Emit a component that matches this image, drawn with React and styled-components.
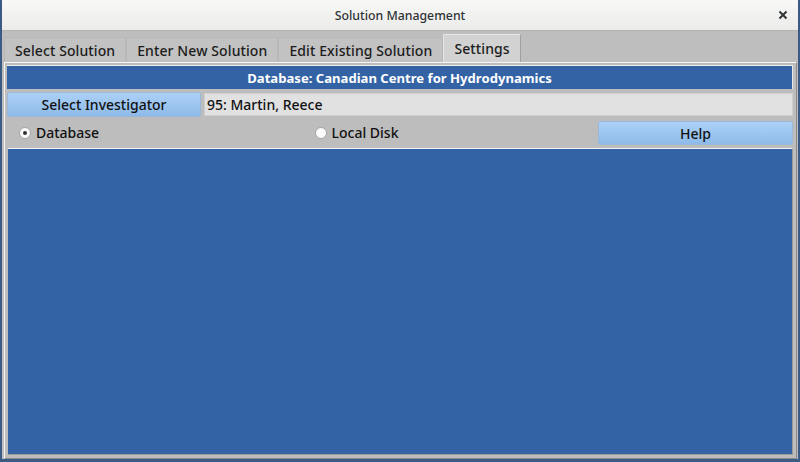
import React from "react";
import styled, { createGlobalStyle } from "styled-components";

const GlobalStyle = createGlobalStyle`
	html, body {
		margin: 0;
		padding: 0;
		background: #3b5b84;
		font-family: "Noto Sans", "Open Sans", sans-serif;
	}
`;

const Window = styled.div`
	display: flex;
	flex-direction: column;
	width: 796px;
	height: 459px;
	margin-left: 2px;
	background: #bebebe;
`;

const TitleBar = styled.div`
	position: relative;
	display: flex;
	align-items: center;
	justify-content: center;
	height: 31px;
	background: linear-gradient(#f8f8f7, #ebebea);
	border-bottom: 1px solid #b3b3b3;
	box-sizing: border-box;
`;

const Title = styled.span`
	font-size: 12.3px;
	font-weight: 500;
	color: #2e3436;
`;

const CloseButton = styled.button`
	position: absolute;
	right: 8px;
	top: 8px;
	width: 14px;
	height: 14px;
	padding: 0;
	border: none;
	background: none;
	display: flex;
	align-items: center;
	justify-content: center;
`;

const Body = styled.div`
	flex: 1;
	display: flex;
	flex-direction: column;
	padding: 0 1px 0 2px;
	min-height: 0;
`;

const TabBar = styled.div`
	display: flex;
	align-items: flex-end;
	height: 31px;
`;

const Tab = styled.div`
	display: flex;
	align-items: center;
	justify-content: center;
	box-sizing: border-box;
	height: ${p => (p.active ? "28px" : "25px")};
	padding: 0 10px;
	font-size: 14px;
	font-weight: 500;
	letter-spacing: 0.1px;
	color: #1c1c1c;
	background: ${p => (p.active ? "#d2d2d2" : "#c2c2c2")};
	border: 1px solid ${p => (p.active ? "#a8a8a8" : "#b0b0b0")};
	border-bottom: none;
	border-right-color: ${p => (p.active ? "#a0a0a0" : "#b8b8b8")};
	border-top-color: ${p => (p.active ? "#e6e6e6" : "#b8b8b8")};
	border-left-color: ${p => (p.active ? "#e6e6e6" : "#b8b8b8")};
	border-radius: 2px 2px 0 0;
`;

const Panel = styled.div`
	flex: 1;
	display: flex;
	flex-direction: column;
	gap: 3px;
	padding: 2px 3px 3px 2px;
	border: 1px solid;
	border-color: #f4f4f4 #8a8a8a #8a8a8a #f4f4f4;
	background: #bdbdbd;
	min-height: 0;
`;

const Banner = styled.div`
	display: flex;
	align-items: center;
	justify-content: center;
	height: 23px;
	background: #3363a5;
	color: #ffffff;
	font-size: 13.1px;
	font-weight: 700;
	border-top: 1px solid #f0f0f0;
	border-right: 1px solid #e8e8e8;
`;

const Row = styled.div`
	display: grid;
	grid-template-columns: ${p => p.columns};
	gap: 3px;
	height: ${p => p.height || "25px"};
	align-items: stretch;
`;

const BlueButton = styled.button`
	font-family: inherit;
	font-size: 14px;
	font-weight: 500;
	color: #111;
	border: 1px solid #9bb8d8;
	border-radius: 2px;
	background: linear-gradient(#acd1f7, #8fbae8);
	padding: 0;
	margin: ${p => p.margin || "0"};
`;

const Field = styled.div`
	display: flex;
	align-items: center;
	padding-left: 2px;
	margin: 1px 0;
	font-size: 14px;
	font-weight: 500;
	color: #111;
	background: #e1e1e1;
	border: 1px solid #cfcfcf;
`;

const RadioLabel = styled.label`
	display: flex;
	align-items: center;
	gap: 5px;
	padding-left: 12px;
	font-size: 14px;
	font-weight: 500;
	color: #111;
`;

const RadioDot = styled.span`
	width: 10px;
	height: 10px;
	border-radius: 50%;
	background: #fbfbfb;
	border: 1px solid #a5a5a5;
	display: flex;
	align-items: center;
	justify-content: center;

	&::after {
		content: "";
		width: 4px;
		height: 4px;
		border-radius: 50%;
		background: ${p => (p.checked ? "#333" : "transparent")};
	}
`;

const Canvas = styled.div`
	flex: 1;
	background: #3363a5;
	border-top: 1px solid #f2f2f2;
	border-right: 1px solid #9a9a9a;
	border-bottom: 1px solid #9a9a9a;
	margin-left: 1px;
`;

const tabs = ["Select Solution", "Enter New Solution", "Edit Existing Solution", "Settings"];

const App = () => {
	return (
		<>
			<GlobalStyle />
			<Window>
				<TitleBar>
					<Title>Solution Management</Title>
					<CloseButton>
						<svg width="10" height="10" viewBox="0 0 10 10">
							<path d="M1.5 1.5 L8.5 8.5 M8.5 1.5 L1.5 8.5" stroke="#2e3436" strokeWidth="2" />
						</svg>
					</CloseButton>
				</TitleBar>
				<Body>
					<TabBar>
						{tabs.map(t => (
							<Tab key={t} active={t === "Settings"}>
								{t}
							</Tab>
						))}
					</TabBar>
					<Panel>
						<Banner>Database: Canadian Centre for Hydrodynamics</Banner>
						<Row columns="194px 1fr">
							<BlueButton>Select Investigator</BlueButton>
							<Field>95: Martin, Reece</Field>
						</Row>
						<Row columns="1fr 1fr 195px">
							<RadioLabel>
								<RadioDot checked />
								Database
							</RadioLabel>
							<RadioLabel>
								<RadioDot />
								Local Disk
							</RadioLabel>
							<BlueButton margin="1px 0 0">Help</BlueButton>
						</Row>
						<Canvas />
					</Panel>
				</Body>
			</Window>
		</>
	);
};

export default App;
